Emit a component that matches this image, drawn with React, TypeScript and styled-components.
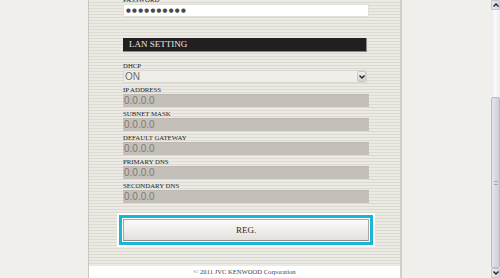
import React from 'react';
import styled, { createGlobalStyle } from 'styled-components';

const GlobalStyle = createGlobalStyle`
  html, body {
    margin: 0;
    padding: 0;
    overflow: hidden;
    background: #f0efec;
  }
`;

const Page = styled.div`
  display: flex;
  width: 500px;
  height: 278px;
  overflow: hidden;
`;

const Main = styled.div`
  flex: 1;
  display: flex;
  justify-content: center;
  overflow: hidden;
`;

const Column = styled.div`
  width: 314px;
  height: 100%;
  box-sizing: border-box;
  border-left: 1px solid #c9c6bf;
  border-right: 2px solid #d2cfc8;
  background: repeating-linear-gradient(
    to bottom,
    #eceae5 0px,
    #eceae5 2px,
    #dcd9d1 2px,
    #dcd9d1 3px
  );
  overflow: hidden;
  display: flex;
  flex-direction: column;
`;

const Form = styled.div`
  margin-top: -5px;
  padding: 0 31px 25px 34px;
  display: flex;
  flex-direction: column;
`;

const Field = styled.div<{ $gap?: number }>`
  display: flex;
  flex-direction: column;
  margin-top: ${p => p.$gap ?? 2}px;
`;

const Label = styled.div`
  height: 9px;
  line-height: 9px;
  font-family: 'Liberation Serif', serif;
  font-size: 6.8px;
  color: #222;
  text-transform: uppercase;
  white-space: nowrap;
`;

const PasswordBox = styled.div`
  width: 246px;
  height: 13px;
  box-sizing: border-box;
  background: #ffffff;
  border: 1px solid #e2dfd9;
  font-family: 'DejaVu Sans', sans-serif;
  font-size: 5.5px;
  line-height: 11px;
  letter-spacing: 1.3px;
  color: #4a4a4a;
  padding-left: 2px;
  overflow: hidden;
  white-space: nowrap;
`;

const SectionBar = styled.div`
  margin-top: 21px;
  width: 244px;
  height: 14px;
  box-sizing: border-box;
  background: #231f20;
  border-right: 1px solid #8d8a86;
  border-bottom: 1px solid #8d8a86;
  color: #ece9e4;
  font-family: 'Liberation Serif', serif;
  font-size: 9px;
  line-height: 13px;
  padding-left: 6px;
`;

const Select = styled.div`
  width: 244px;
  height: 13px;
  box-sizing: border-box;
  background: #efeeea;
  border: 1px solid #dad7d0;
  display: flex;
  align-items: center;
  justify-content: space-between;
  font-family: 'Liberation Sans', sans-serif;
  font-size: 10px;
  color: #6e6c6a;
  padding-left: 1px;
`;

const SelectArrow = styled.div`
  width: 9px;
  height: 11px;
  border-radius: 2px;
  background: linear-gradient(#eeeeee, #d4d4d4);
  border: 1px solid #c9c9c9;
  box-sizing: border-box;
  display: flex;
  align-items: center;
  justify-content: center;
`;

const ReadInput = styled.div`
  width: 246px;
  height: 13px;
  box-sizing: border-box;
  background: #c4c0b9;
  border-top: 1px solid #bdb9b2;
  font-family: 'Liberation Sans', sans-serif;
  font-size: 10px;
  line-height: 12px;
  color: #7c7975;
  padding-left: 1px;
`;

const ButtonRing = styled.div`
  margin-top: 16px;
  width: 246px;
  box-shadow: 0 0 0 1px #ffffff, 0 0 0 4px #1ab4d5, 0 0 0 6px #ffffff;
`;

const RegButton = styled.button`
  width: 100%;
  height: 22px;
  display: block;
  margin: 0;
  box-sizing: border-box;
  border: 1px solid #aaa7a1;
  border-bottom-color: #8f8c87;
  background: linear-gradient(to bottom, #fbfaf8 0%, #efedea 55%, #e2e0db 100%);
  font-family: 'Liberation Serif', serif;
  font-size: 9px;
  color: #2c2c2c;
  cursor: pointer;
  padding: 0;
`;

const Footer = styled.div`
  height: 16px;
  background: #ffffff;
  text-align: center;
  font-family: 'Liberation Serif', serif;
  font-size: 6.6px;
  line-height: 12px;
  color: #444;
`;

const Scrollbar = styled.div`
  width: 10px;
  height: 278px;
  display: flex;
  flex-direction: column;
  background: #f0efec;
`;

const ArrowButton = styled.div`
  height: 10px;
  margin-left: 1px;
  background: linear-gradient(to right, #e8e8ee, #d6d6de);
  border: 1px solid #c4c4cc;
  border-radius: 1px;
  box-sizing: border-box;
  display: flex;
  align-items: center;
  justify-content: center;
`;

const Track = styled.div`
  flex: 1;
  margin-left: 1px;
  display: flex;
  flex-direction: column;
  background: linear-gradient(to right, #ececf0, #fafafb 50%, #ececf0);
`;

const TrackSpace = styled.div`
  height: 87px;
`;

const Thumb = styled.div`
  flex: 1;
  box-sizing: border-box;
  border: 1px solid #b8b8c6;
  border-radius: 2px;
  background: linear-gradient(to right, #e4e4ec, #cfcfdb);
  display: flex;
  align-items: center;
  justify-content: center;
`;

const Grip = styled.div`
  width: 4px;
  height: 4px;
  border-top: 1px solid #a8a8b6;
  border-bottom: 1px solid #a8a8b6;
  box-sizing: border-box;
`;

const Chevron = ({ up }: { up?: boolean }) => (
  <svg width="6" height="4" viewBox="0 0 6 4">
    <polyline
      points={up ? '0.5,3.5 3,1 5.5,3.5' : '0.5,0.5 3,3 5.5,0.5'}
      fill="none"
      stroke="#222"
      strokeWidth="1.4"
    />
  </svg>
);

const fields = [
  'IP ADDRESS',
  'SUBNET MASK',
  'DEFAULT GATEWAY',
  'PRIMARY DNS',
  'SECONDARY DNS',
];

export default function App() {
  return (
    <>
      <GlobalStyle />
      <Page>
        <Main>
          <Column>
            <Form>
              <Field $gap={0}>
                <Label>Password</Label>
                <PasswordBox>●●●●●●●●●●</PasswordBox>
              </Field>
              <SectionBar>LAN SETTING</SectionBar>
              <Field $gap={9}>
                <Label>DHCP</Label>
                <Select>
                  <span>ON</span>
                  <SelectArrow>
                    <Chevron />
                  </SelectArrow>
                </Select>
              </Field>
              {fields.map(name => (
                <Field key={name}>
                  <Label>{name}</Label>
                  <ReadInput>0.0.0.0</ReadInput>
                </Field>
              ))}
              <ButtonRing>
                <RegButton>REG.</RegButton>
              </ButtonRing>
            </Form>
            <Footer>© 2011 JVC KENWOOD Corporation</Footer>
          </Column>
        </Main>
        <Scrollbar>
          <ArrowButton>
            <Chevron up />
          </ArrowButton>
          <Track>
            <TrackSpace />
            <Thumb>
              <Grip />
            </Thumb>
          </Track>
          <ArrowButton>
            <Chevron />
          </ArrowButton>
        </Scrollbar>
      </Page>
    </>
  );
}
